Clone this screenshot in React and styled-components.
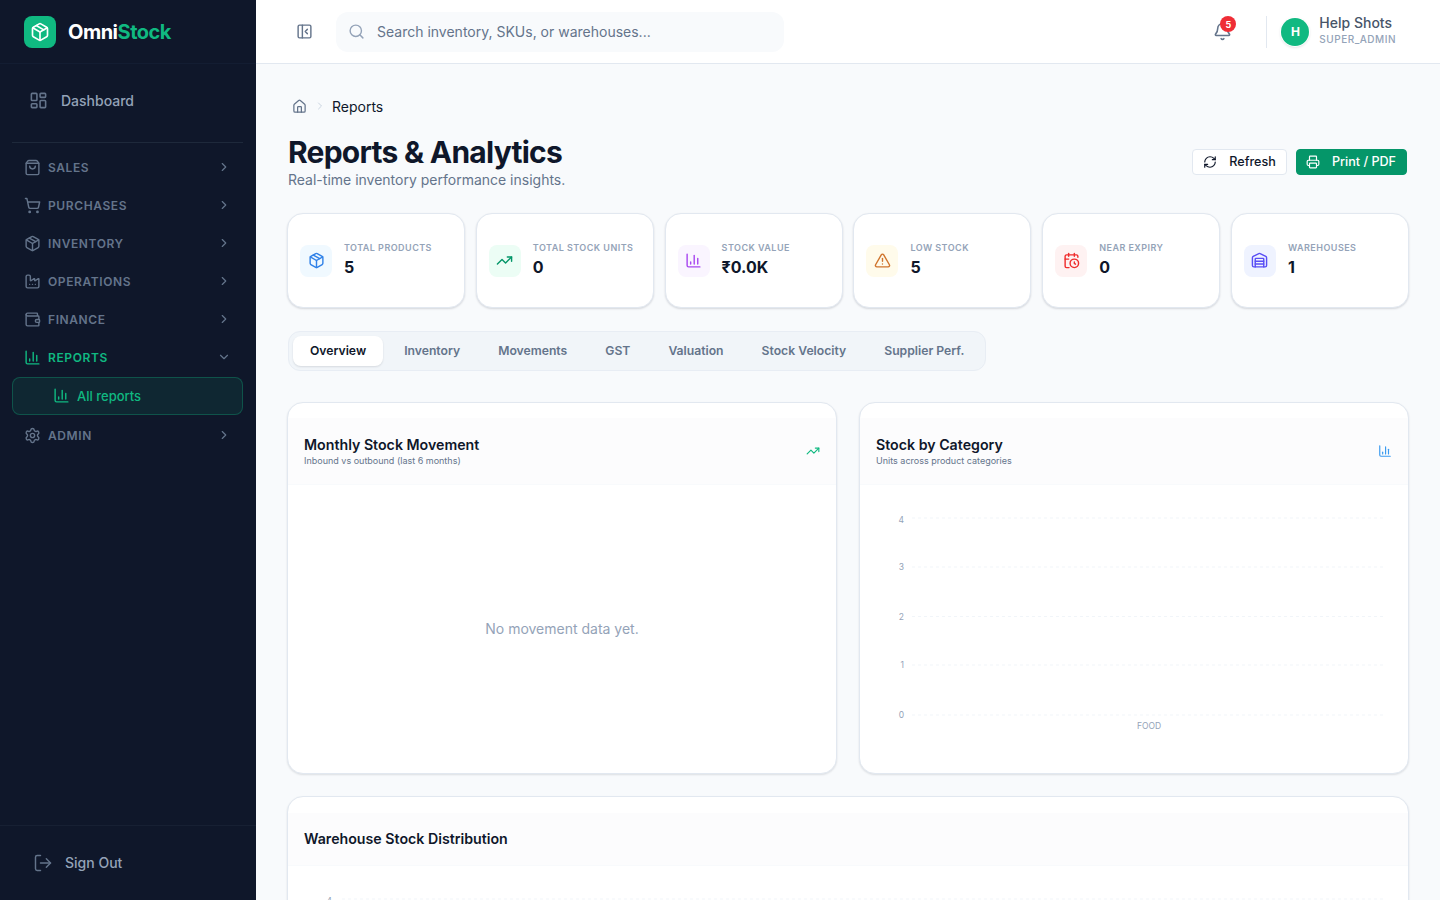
import React from "react";
import styled, { createGlobalStyle } from "styled-components";
import {
  Bell,
  CalendarClock,
  ChartColumn,
  ChevronDown,
  ChevronRight,
  Factory,
  House,
  LayoutDashboard,
  LogOut,
  Package,
  PanelLeftClose,
  Printer,
  RefreshCw,
  Search,
  Settings,
  ShoppingBag,
  ShoppingCart,
  TrendingUp,
  TriangleAlert,
  Wallet,
  Warehouse,
} from "lucide-react";

const GlobalStyle = createGlobalStyle`
  html, body { margin: 0; padding: 0; height: 100%; overflow: hidden; }
  body { font-family: Inter, "Liberation Sans", sans-serif; background: #f8fafc; }
  * { box-sizing: border-box; }
`;

const Shell = styled.div`
  display: flex;
  width: 1440px;
  height: 900px;
  overflow: hidden;
`;

const Sidebar = styled.aside`
  width: 256px;
  flex: none;
  display: flex;
  flex-direction: column;
  background: #0f172a;
`;

const Brand = styled.div`
  height: 64px;
  flex: none;
  display: flex;
  align-items: center;
  gap: 12px;
  padding: 0 24px;
  border-bottom: 1px solid #131d32;
`;

const BrandMark = styled.div`
  width: 32px;
  height: 32px;
  border-radius: 8px;
  background: #10b981;
  color: #fff;
  display: flex;
  align-items: center;
  justify-content: center;
`;

const BrandName = styled.div`
  font-size: 20px;
  font-weight: 700;
  letter-spacing: -0.5px;
  color: #fff;
  span { color: #10b981; }
`;

const SideNav = styled.nav`
  flex: 1;
  padding: 16px 13px 0 12px;
  display: flex;
  flex-direction: column;
`;

const DashLink = styled.div`
  height: 41px;
  display: flex;
  align-items: center;
  gap: 13px;
  padding: 0 17px;
  color: #94a3b8;
  font-size: 14px;
  font-weight: 500;
  svg { color: #64748b; }
`;

const NavDivider = styled.div`
  height: 1px;
  margin: 21px 0 5px;
  background: #1e293b;
`;

const GroupRow = styled.div`
  height: 38px;
  display: flex;
  align-items: center;
  gap: 7px;
  padding: 0 12px;
  font-size: 12px;
  font-weight: 600;
  letter-spacing: 0.6px;
  color: ${(p) => (p.$active ? "#10b981" : "#64748b")};
  > span { flex: 1; }
  > svg:last-child { color: #64748b; }
`;

const SubLink = styled.div`
  height: 38px;
  margin: 1px 0;
  display: flex;
  align-items: center;
  gap: 7px;
  padding: 0 40px 1px;
  border: 1px solid rgba(16, 185, 129, 0.3);
  border-radius: 8px;
  background: rgba(16, 185, 129, 0.1);
  color: #10b981;
  font-size: 13px;
  font-weight: 500;
`;

const SideFooter = styled.div`
  height: 75px;
  flex: none;
  display: flex;
  align-items: center;
  gap: 12px;
  padding: 0 33px 1px;
  border-top: 1px solid #172033;
  color: #94a3b8;
  font-size: 14px;
  font-weight: 500;
  svg { color: #64748b; }
`;

const Main = styled.div`
  flex: 1;
  min-width: 0;
  display: flex;
  flex-direction: column;
  overflow: hidden;
`;

const Topbar = styled.header`
  height: 64px;
  flex: none;
  display: flex;
  align-items: center;
  padding: 0 44px 0 40px;
  background: #fff;
  border-bottom: 1px solid #e2e8f0;
  color: #64748b;
`;

const SearchBox = styled.div`
  width: 448px;
  height: 40px;
  margin-left: 23px;
  padding: 0 12px;
  display: flex;
  align-items: center;
  gap: 12px;
  border-radius: 12px;
  background: #f8fafc;
  color: #94a3b8;
  span { font-size: 14px; color: #64748b; }
`;

const TopRight = styled.div`
  margin-left: auto;
  display: flex;
  align-items: center;
`;

const BellWrap = styled.div`
  position: relative;
  display: flex;
  margin-right: 34px;
`;

const BellBadge = styled.span`
  position: absolute;
  top: -6px;
  right: -4px;
  width: 16px;
  height: 16px;
  border-radius: 50%;
  background: #ef2d36;
  color: #fff;
  font-size: 9px;
  font-weight: 700;
  display: flex;
  align-items: center;
  justify-content: center;
`;

const UserBlock = styled.div`
  height: 32px;
  display: flex;
  align-items: center;
  gap: 10px;
  padding-left: 14px;
  border-left: 1px solid #e2e8f0;
`;

const Avatar = styled.div`
  width: 28px;
  height: 28px;
  border-radius: 50%;
  background: #10b981;
  color: #fff;
  font-size: 12px;
  font-weight: 700;
  display: flex;
  align-items: center;
  justify-content: center;
  box-shadow: 0 0 0 1px #fff, 0 1px 3px rgba(15, 23, 42, 0.2);
`;

const UserText = styled.div`
  padding-bottom: 2px;
`;

const UserName = styled.div`
  font-size: 14px;
  line-height: 16px;
  font-weight: 500;
  color: #475569;
`;

const UserRole = styled.div`
  margin-top: 1px;
  font-size: 10px;
  line-height: 14px;
  letter-spacing: 0.5px;
  font-weight: 500;
  color: #94a3b8;
`;

const Content = styled.main`
  flex: 1;
  padding: 31px 32px 0;
  overflow: hidden;
  background: #f8fafc;
`;

const Crumbs = styled.div`
  height: 22px;
  display: flex;
  align-items: center;
  gap: 7px;
  padding-left: 4px;
  font-size: 14px;
  color: #0f172a;
  svg { color: #64748b; }
  svg:nth-child(2) { color: #cbd5e1; }
  span { margin-left: -1px; }
`;

const TitleRow = styled.div`
  margin-top: 17px;
  display: flex;
  align-items: center;
  justify-content: space-between;
`;

const PageTitle = styled.h1`
  margin: 0;
  font-size: 30px;
  line-height: 36px;
  font-weight: 700;
  letter-spacing: -0.75px;
  color: #0f172a;
`;

const PageSub = styled.p`
  margin: 0;
  font-size: 14px;
  line-height: 20px;
  color: #64748b;
`;

const Actions = styled.div`
  display: flex;
  gap: 9px;
  margin-right: 1px;
`;

const ActionButton = styled.button`
  height: 26px;
  padding: 0 10px 1px ${(p) => (p.$primary ? "9px" : "10px")};
  display: flex;
  align-items: center;
  gap: 12px;
  border-radius: 4px;
  border: 1px solid ${(p) => (p.$primary ? "#059669" : "#e2e8f0")};
  background: ${(p) => (p.$primary ? "#059669" : "#fff")};
  color: ${(p) => (p.$primary ? "#fff" : "#0f172a")};
  font: 500 12.6px Inter, sans-serif;
`;

const StatGrid = styled.div`
  margin: 23px -1px 0;
  display: grid;
  grid-template-columns: repeat(6, 1fr);
  gap: 10.8px;
`;

const StatCard = styled.div`
  height: 95px;
  padding: 0 12px;
  display: flex;
  align-items: center;
  gap: 12px;
  background: #fff;
  border: 1px solid #e2e8f0;
  border-radius: 16px;
  box-shadow: 0 1px 2px rgba(15, 23, 42, 0.15);
`;

const StatIcon = styled.div`
  width: 32px;
  height: 32px;
  flex: none;
  border-radius: 8px;
  display: flex;
  align-items: center;
  justify-content: center;
  color: ${(p) => p.$color};
  background: ${(p) => p.$bg};
`;

const StatText = styled.div`
  padding-bottom: 1px;
`;

const StatLabel = styled.div`
  font-size: 9px;
  line-height: 12px;
  font-weight: 600;
  letter-spacing: 0.46px;
  color: #94a3b8;
  white-space: nowrap;
`;

const StatValue = styled.div`
  margin-top: 1px;
  font-size: 16px;
  line-height: 24px;
  font-weight: 700;
  color: #0f172a;
`;

const TabBar = styled.div`
  margin-top: 23px;
  width: 698px;
  height: 40px;
  padding: 4px;
  display: flex;
  gap: 4px;
  background: #f1f5f9;
  border: 1px solid #e8edf4;
  border-radius: 12px;
`;

const Tab = styled.div`
  flex: none;
  padding: 0 17px 1px;
  display: flex;
  align-items: center;
  white-space: nowrap;
  border-radius: 8px;
  font-size: 12.2px;
  font-weight: 600;
  color: ${(p) => (p.$active ? "#0f172a" : "#64748b")};
  background: ${(p) => (p.$active ? "#fff" : "transparent")};
  box-shadow: ${(p) => (p.$active ? "0 1px 2px rgba(15, 23, 42, 0.12)" : "none")};
`;

const ChartGrid = styled.div`
  margin: 31px -1px 0;
  display: grid;
  grid-template-columns: 1fr 1fr;
  gap: 22px;
`;

const Panel = styled.section`
  height: ${(p) => p.$height || "372px"};
  margin: ${(p) => (p.$wide ? "22px -1px 0" : "0")};
  background: #fff;
  border: 1px solid #e2e8f0;
  border-radius: 16px;
  box-shadow: 0 1px 2px rgba(15, 23, 42, 0.12);
  overflow: hidden;
`;

const PanelHead = styled.div`
  margin-top: ${(p) => (p.$wide ? "16px" : "15px")};
  height: ${(p) => (p.$wide ? "53px" : "67px")};
  padding: 0 16px;
  display: flex;
  align-items: center;
  justify-content: space-between;
  background: #fcfcfd;
  border-bottom: 1px solid #f8fafc;
  color: ${(p) => p.$color};
`;

const PanelTitle = styled.h3`
  margin: 0;
  font-size: 14.2px;
  line-height: 20px;
  font-weight: 600;
  color: #0f172a;
`;

const PanelSub = styled.p`
  margin: 0;
  font-size: 9px;
  line-height: 12px;
  color: #64748b;
`;

const EmptyNote = styled.div`
  height: 286px;
  display: flex;
  align-items: center;
  justify-content: center;
  font-size: 14px;
  color: #94a3b8;
`;

const ChartSvg = styled.svg`
  display: block;
  text { font-family: Inter, sans-serif; font-size: 8.5px; fill: #94a3b8; }
  line { stroke: #f1f5f9; stroke-dasharray: 3 3; }
`;

const groups = [
  { label: "SALES", icon: ShoppingBag },
  { label: "PURCHASES", icon: ShoppingCart },
  { label: "INVENTORY", icon: Package },
  { label: "OPERATIONS", icon: Factory },
  { label: "FINANCE", icon: Wallet },
];

const stats = [
  { label: "TOTAL PRODUCTS", value: "5", icon: Package, color: "#3182e8", bg: "#f0f9ff" },
  { label: "TOTAL STOCK UNITS", value: "0", icon: TrendingUp, color: "#059669", bg: "#ecfdf5" },
  { label: "STOCK VALUE", value: "₹0.0K", icon: ChartColumn, color: "#a847f0", bg: "#faf5ff" },
  { label: "LOW STOCK", value: "5", icon: TriangleAlert, color: "#d0752e", bg: "#fffbeb" },
  { label: "NEAR EXPIRY", value: "0", icon: CalendarClock, color: "#ef2d2d", bg: "#fef2f2" },
  { label: "WAREHOUSES", value: "1", icon: Warehouse, color: "#5a4ff5", bg: "#eff3ff" },
];

const tabs = ["Overview", "Inventory", "Movements", "GST", "Valuation", "Stock Velocity", "Supplier Perf."];

// the top tick sits a little under its line, the others are centred on it
const gridLines = [
  { y: 33, dy: 5, label: "4" },
  { y: 82, dy: 3, label: "3" },
  { y: 131.5, dy: 3, label: "2" },
  { y: 180, dy: 3, label: "1" },
  { y: 230, dy: 3, label: "0" },
];

function Sidenav() {
  return (
    <Sidebar>
      <Brand>
        <BrandMark>
          <Package size={20} />
        </BrandMark>
        <BrandName>
          Omni<span>Stock</span>
        </BrandName>
      </Brand>
      <SideNav>
        <DashLink>
          <LayoutDashboard size={19} />
          Dashboard
        </DashLink>
        <NavDivider />
        {groups.map((g) => (
          <GroupRow key={g.label}>
            <g.icon size={17} />
            <span>{g.label}</span>
            <ChevronRight size={14} />
          </GroupRow>
        ))}
        <GroupRow $active>
          <ChartColumn size={17} />
          <span>REPORTS</span>
          <ChevronDown size={14} />
        </GroupRow>
        <SubLink>
          <ChartColumn size={17} />
          All reports
        </SubLink>
        <GroupRow>
          <Settings size={17} />
          <span>ADMIN</span>
          <ChevronRight size={14} />
        </GroupRow>
      </SideNav>
      <SideFooter>
        <LogOut size={20} strokeWidth={1.75} />
        Sign Out
      </SideFooter>
    </Sidebar>
  );
}

function AxisChart({ width, height, left, right, foodX, labelGap = 8 }) {
  return (
    <ChartSvg width={width} height={height} viewBox={`0 0 ${width} ${height}`}>
      {gridLines.map((l) => (
        <g key={l.label}>
          <line x1={left} x2={right} y1={l.y} y2={l.y} />
          <text x={left - labelGap} y={l.y + l.dy} textAnchor="end">
            {l.label}
          </text>
        </g>
      ))}
      {foodX && (
        <text x={foodX} y={244} textAnchor="middle">
          FOOD
        </text>
      )}
    </ChartSvg>
  );
}

export default function App() {
  return (
    <Shell>
      <GlobalStyle />
      <Sidenav />
      <Main>
        <Topbar>
          <PanelLeftClose size={17} />
          <SearchBox>
            <Search size={17} />
            <span>Search inventory, SKUs, or warehouses...</span>
          </SearchBox>
          <TopRight>
            <BellWrap>
              <Bell size={19} />
              <BellBadge>5</BellBadge>
            </BellWrap>
            <UserBlock>
              <Avatar>H</Avatar>
              <UserText>
                <UserName>Help Shots</UserName>
                <UserRole>SUPER_ADMIN</UserRole>
              </UserText>
            </UserBlock>
          </TopRight>
        </Topbar>
        <Content>
          <Crumbs>
            <House size={15} />
            <ChevronRight size={12} />
            <span>Reports</span>
          </Crumbs>
          <TitleRow>
            <div>
              <PageTitle>Reports &amp; Analytics</PageTitle>
              <PageSub>Real-time inventory performance insights.</PageSub>
            </div>
            <Actions>
              <ActionButton>
                <RefreshCw size={14} />
                Refresh
              </ActionButton>
              <ActionButton $primary>
                <Printer size={14} />
                Print / PDF
              </ActionButton>
            </Actions>
          </TitleRow>
          <StatGrid>
            {stats.map((s) => (
              <StatCard key={s.label}>
                <StatIcon $color={s.color} $bg={s.bg}>
                  <s.icon size={17} />
                </StatIcon>
                <StatText>
                  <StatLabel>{s.label}</StatLabel>
                  <StatValue>{s.value}</StatValue>
                </StatText>
              </StatCard>
            ))}
          </StatGrid>
          <TabBar>
            {tabs.map((t, i) => (
              <Tab key={t} $active={i === 0}>
                {t}
              </Tab>
            ))}
          </TabBar>
          <ChartGrid>
            <Panel>
              <PanelHead $color="#10b981">
                <div>
                  <PanelTitle>Monthly Stock Movement</PanelTitle>
                  <PanelSub>Inbound vs outbound (last 6 months)</PanelSub>
                </div>
                <TrendingUp size={14} />
              </PanelHead>
              <EmptyNote>No movement data yet.</EmptyNote>
            </Panel>
            <Panel>
              <PanelHead $color="#3b9bf0">
                <div>
                  <PanelTitle>Stock by Category</PanelTitle>
                  <PanelSub>Units across product categories</PanelSub>
                </div>
                <ChartColumn size={14} />
              </PanelHead>
              <AxisChart width={548} height={288} left={52} right={523} foodX={289} />
            </Panel>
          </ChartGrid>
          <Panel $wide $height="200px">
            <PanelHead $wide $color="#0f172a">
              <PanelTitle>Warehouse Stock Distribution</PanelTitle>
            </PanelHead>
            <AxisChart width={1120} height={120} left={54} right={1096} labelGap={10} />
          </Panel>
        </Content>
      </Main>
    </Shell>
  );
}
